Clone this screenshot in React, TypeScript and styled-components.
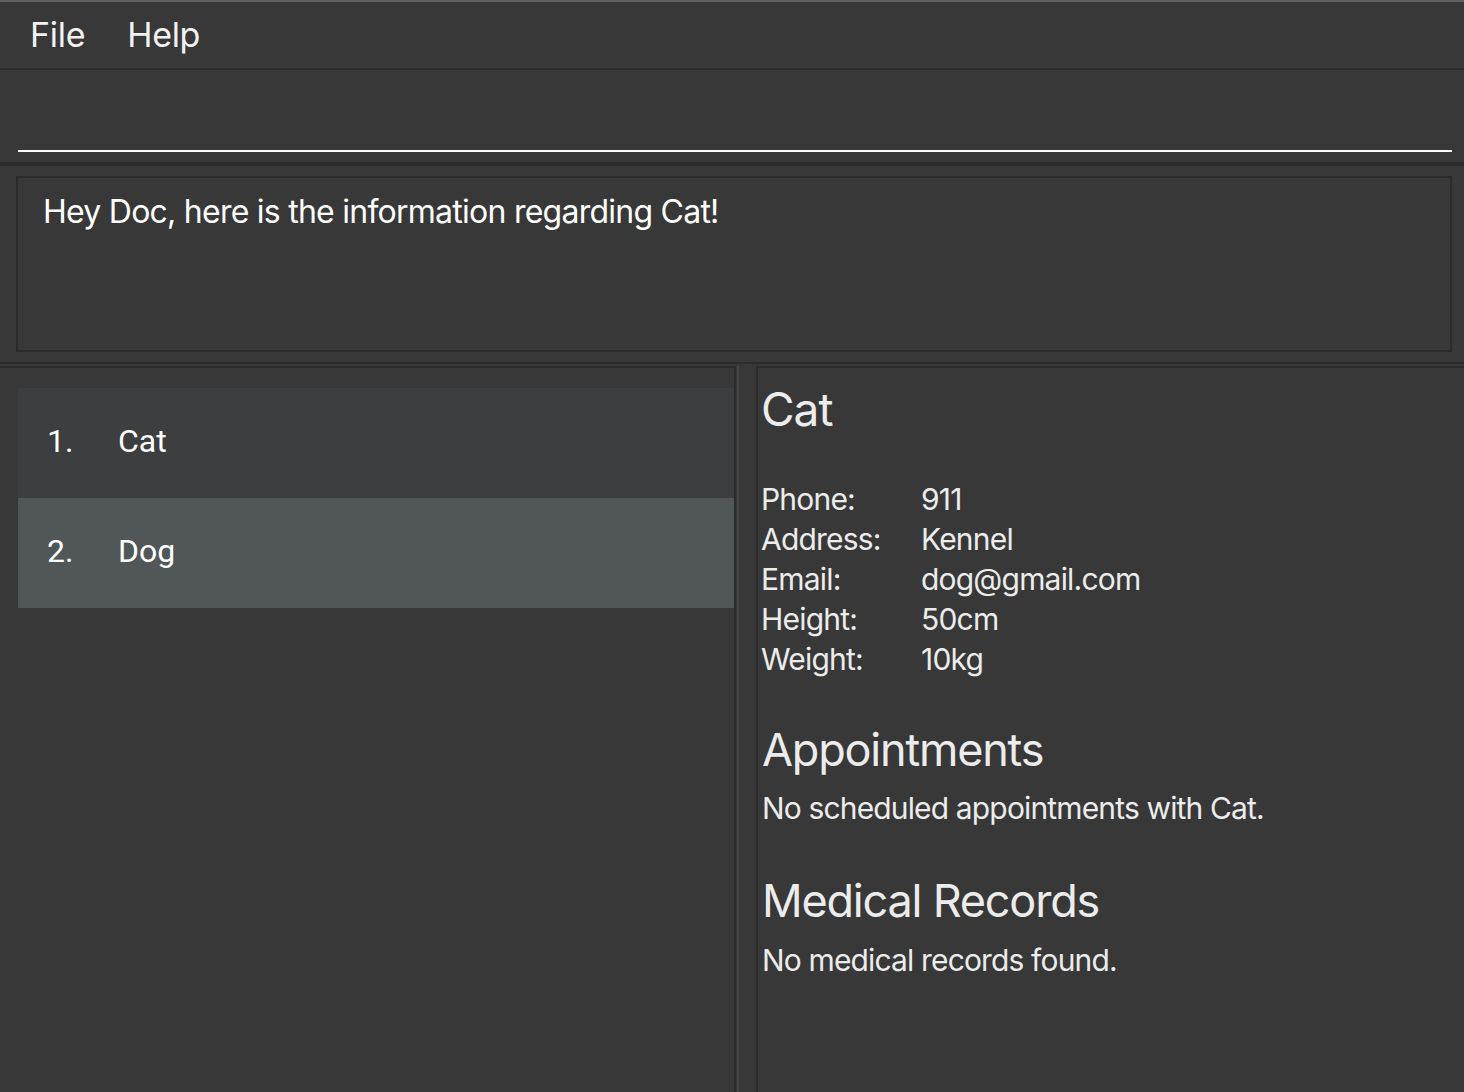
import React from "react";
import styled, { createGlobalStyle } from "styled-components";

const Global = createGlobalStyle`
  html, body {
    margin: 0;
    padding: 0;
    background: #383838;
    overflow: hidden;
  }
  * { box-sizing: border-box; }
`;

const Shell = styled.div`
  display: flex;
  flex-direction: column;
  width: 1464px;
  height: 1092px;
  background: #383838;
  font-family: Inter, "Noto Sans", sans-serif;
`;

const MenuBar = styled.div`
  display: flex;
  align-items: center;
  gap: 42px;
  height: 70px;
  padding-left: 30px;
  border-top: 2px solid #5f5f5f;
  border-bottom: 2px solid #2b2b2b;
`;

const MenuItem = styled.span`
  font-size: 34px;
  letter-spacing: -0.3px;
  color: #f2f2f2;
  line-height: 40px;
`;

const CommandArea = styled.div`
  display: flex;
  align-items: flex-end;
  height: 92px;
  padding: 0 12px 10px 18px;
`;

const CommandInput = styled.div`
  flex: 1;
  height: 40px;
  border-bottom: 2px solid #ffffff;
`;

const ResultArea = styled.div`
  padding: 10px 12px 10px 16px;
  border-top: 4px solid #2b2b2b;
  border-bottom: 2px solid #2b2b2b;
`;

const ResultBox = styled.div`
  height: 176px;
  border: 2px solid #2b2b2b;
  padding: 14px 25px;
  font-size: 32px;
  letter-spacing: -0.75px;
  color: #ffffff;
`;

const Split = styled.div`
  display: flex;
  flex: 1;
  padding-top: 2px;
  min-height: 0;
`;

const ListPanel = styled.div`
  width: 736px;
  padding: 20px 0 0 18px;
  border-top: 2px solid #2b2b2b;
  border-right: 2px solid #2b2b2b;
  display: flex;
  flex-direction: column;
`;

const ListCell = styled.div<{ $odd: boolean }>`
  display: flex;
  align-items: center;
  height: 110px;
  padding: 0 0 4px 29px;
  background: ${(p) => (p.$odd ? "#515658" : "#3c3e3f")};
  font-family: Roboto, "Liberation Sans", sans-serif;
  font-size: 32px;
  color: #ffffff;
`;

const CellIndex = styled.span`
  width: 71px;
`;

const Divider = styled.div`
  width: 20px;
  padding-left: 1px;
  display: flex;
`;

const DividerLine = styled.div`
  width: 2px;
  background: #444444;
`;

const DetailPanel = styled.div`
  flex: 1;
  border-top: 2px solid #2b2b2b;
  border-left: 2px solid #2b2b2b;
  padding: 13px 0 0 3px;
  color: #ececec;
  display: flex;
  flex-direction: column;
`;

const Title = styled.div`
  font-size: 46px;
  letter-spacing: -1px;
  line-height: 56px;
`;

const Fields = styled.div`
  display: grid;
  grid-template-columns: 160px 1fr;
  margin-top: 42px;
  font-size: 30px;
  letter-spacing: -0.8px;
  line-height: 40px;
`;

const SectionTitle = styled.div<{ $gap: number }>`
  margin-top: ${(p) => p.$gap}px;
  padding-left: 1px;
  font-size: 45px;
  letter-spacing: -1.2px;
  line-height: 54px;
`;

const SectionText = styled.div<{ $gap: number }>`
  margin-top: ${(p) => p.$gap}px;
  padding-left: 1px;
  font-size: 30px;
  letter-spacing: -0.85px;
  line-height: 40px;
`;

const pets = ["Cat", "Dog"];

const fields: [string, string][] = [
  ["Phone:", "911"],
  ["Address:", "Kennel"],
  ["Email:", "dog@gmail.com"],
  ["Height:", "50cm"],
  ["Weight:", "10kg"],
];

export default function App() {
  return (
    <>
      <Global />
      <Shell>
        <MenuBar>
          <MenuItem>File</MenuItem>
          <MenuItem>Help</MenuItem>
        </MenuBar>
        <CommandArea>
          <CommandInput />
        </CommandArea>
        <ResultArea>
          <ResultBox>Hey Doc, here is the information regarding Cat!</ResultBox>
        </ResultArea>
        <Split>
          <ListPanel>
            {pets.map((p, i) => (
              <ListCell key={p} $odd={i % 2 === 1}>
                <CellIndex>{i + 1}.</CellIndex>
                <span>{p}</span>
              </ListCell>
            ))}
          </ListPanel>
          <Divider>
            <DividerLine />
          </Divider>
          <DetailPanel>
            <Title>Cat</Title>
            <Fields>
              {fields.map(([k, v]) => (
                <React.Fragment key={k}>
                  <span>{k}</span>
                  <span>{v}</span>
                </React.Fragment>
              ))}
            </Fields>
            <SectionTitle $gap={44}>Appointments</SectionTitle>
            <SectionText $gap={11}>No scheduled appointments with Cat.</SectionText>
            <SectionTitle $gap={46}>Medical Records</SectionTitle>
            <SectionText $gap={12}>No medical records found.</SectionText>
          </DetailPanel>
        </Split>
      </Shell>
    </>
  );
}
